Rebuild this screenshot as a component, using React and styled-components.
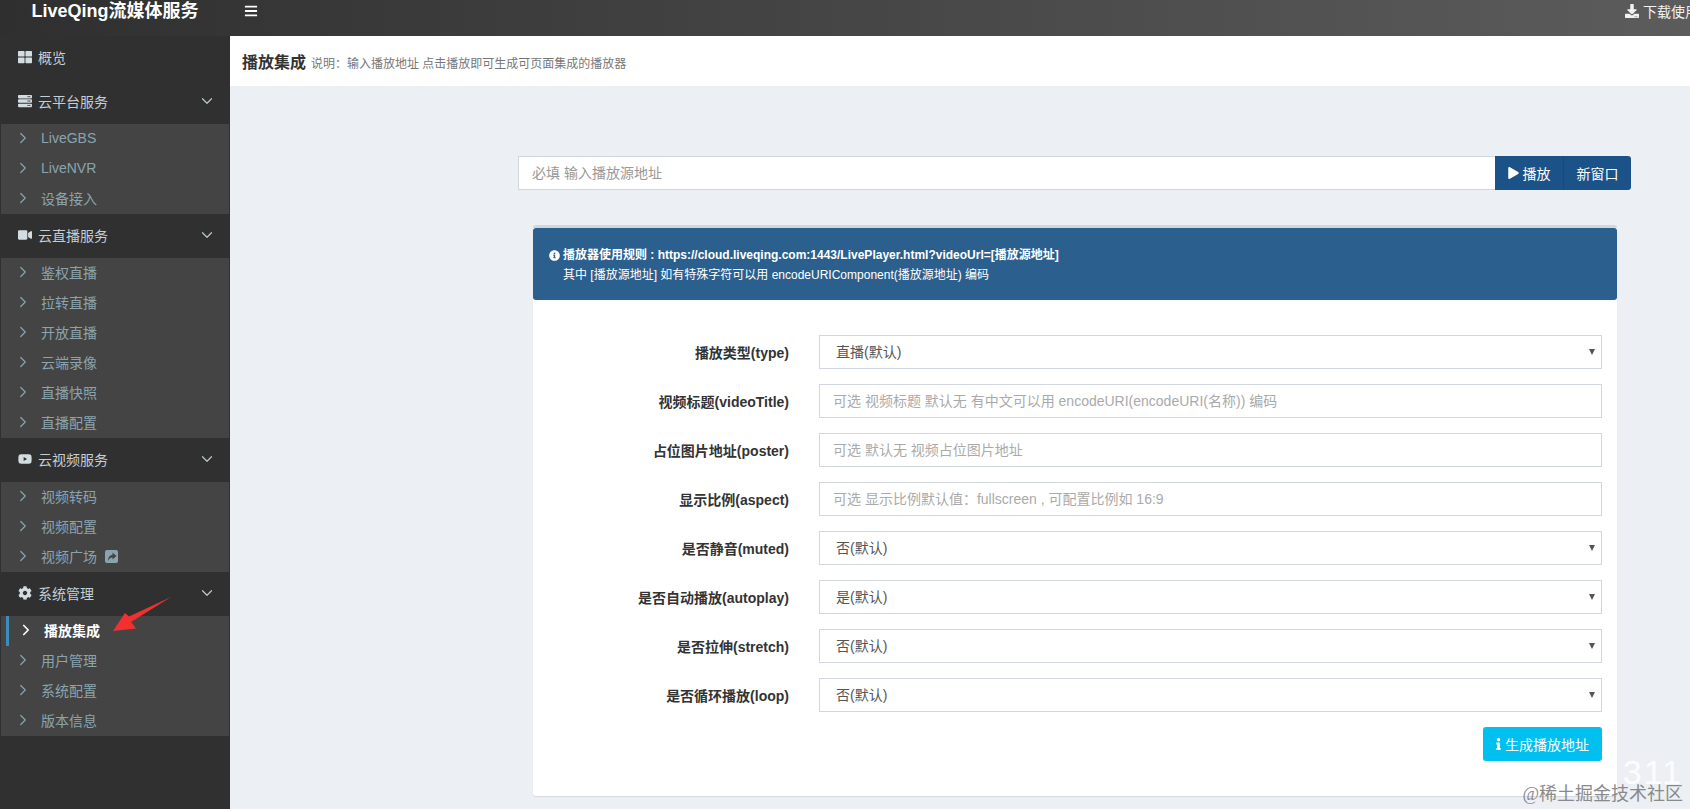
import React from 'react';
import styled, { createGlobalStyle } from 'styled-components';
import { ChevronDown, ChevronRight } from 'lucide-react';
import {
  FaBars,
  FaCog,
  FaDownload,
  FaInfo,
  FaInfoCircle,
  FaPlay,
  FaServer,
  FaThLarge,
  FaVideo,
  FaYoutube,
} from 'react-icons/fa';

const GlobalStyle = createGlobalStyle`
  html, body {
    margin: 0;
    padding: 0;
    height: 100%;
    overflow: hidden;
    font-family: "Liberation Sans", "Noto Sans CJK SC", sans-serif;
    font-size: 14px;
    background: #ecf0f5;
  }
  * {
    box-sizing: border-box;
  }
`;

const Page = styled.div`
  position: relative;
  width: 100%;
  height: 100vh;
  display: flex;
  flex-direction: column;
  overflow: hidden;
`;

const Topbar = styled.header`
  flex: 0 0 36px;
  display: flex;
  align-items: flex-start;
  background: linear-gradient(to right, #2f2f2f, #5c5c5c);
  color: #fff;
  overflow: hidden;
`;

const Logo = styled.div`
  width: 230px;
  text-align: center;
  font-size: 18px;
  font-weight: 700;
  line-height: 22px;
`;

const MenuToggle = styled.div`
  display: flex;
  align-items: center;
  height: 22px;
  padding-left: 14px;
  font-size: 14px;
`;

const DownloadLink = styled.div`
  margin-left: auto;
  width: 65px;
  flex: none;
  display: flex;
  align-items: center;
  gap: 4px;
  height: 22px;
  white-space: nowrap;
  color: #f2f2f2;

  svg {
    flex: none;
  }
`;

const Body = styled.div`
  flex: 1;
  display: flex;
  min-height: 0;
`;

const Sidebar = styled.nav`
  flex: 0 0 230px;
  background: #303030;
`;

const MenuHeader = styled.div`
  height: 44px;
  display: flex;
  align-items: center;
  padding: 0 0 2px 18px;
  color: #c4ced3;
  background: #303030;

  > svg:first-child {
    flex: none;
    width: 14px;
    height: 14px;
    margin-right: 6px;
    color: #d3dce0;
  }
`;

const Caret = styled(ChevronDown)`
  margin-left: auto;
  margin-right: 14px;
  color: #b8c7ce;
`;

const SubMenu = styled.div`
  margin: 0 1px;
  background: #444;
`;

const SubItem = styled.div`
  position: relative;
  height: 30px;
  display: flex;
  align-items: center;
  padding: 0 0 2px ${({ $active }) => ($active ? '16px' : '13px')};
  font-weight: ${({ $active }) => ($active ? 700 : 400)};
  color: ${({ $active }) => ($active ? '#fff' : '#8aa4af')};

  > svg:first-child {
    flex: none;
    margin-right: 9px;
    color: ${({ $active }) => ($active ? '#fff' : '#8aa4af')};
  }

  ${({ $active }) =>
    $active &&
    `
    &::before {
      content: '';
      position: absolute;
      left: 5px;
      top: 0;
      bottom: 0;
      width: 3px;
      background: #3c8dbc;
    }
  `}
`;

const ShareBadge = styled.svg`
  width: 13px;
  height: 13px;
  margin-left: 8px;
`;

const Main = styled.main`
  flex: 1;
  min-width: 0;
  background: #ecf0f5;
`;

const PageHeader = styled.div`
  height: 50px;
  padding-left: 12px;
  display: flex;
  align-items: center;
  background: #fff;
`;

const PageTitle = styled.h1`
  margin: 0 5px 0 0;
  font-size: 16px;
  font-weight: 700;
  color: #333;
`;

const PageHint = styled.small`
  font-size: 12px;
  color: #777;
  margin-top: 3px;
`;

const SourceRow = styled.div`
  display: flex;
  height: 34px;
  margin: 70px 59px 0 288px;
`;

const SourceInput = styled.input`
  flex: 1;
  min-width: 0;
  height: 34px;
  padding: 0 13px;
  border: 1px solid #d2d6de;
  border-right: 0;
  outline: 0;
  background: #fff;
  font: inherit;

  &::placeholder {
    color: #999;
  }
`;

const SourceButton = styled.button`
  height: 34px;
  width: ${({ $width }) => $width}px;
  padding: 0;
  display: flex;
  align-items: center;
  justify-content: center;
  gap: 4px;
  border: 0;
  border-left: ${({ $divided }) => ($divided ? '1px solid #174a7c' : '0')};
  border-radius: ${({ $last }) => ($last ? '0 3px 3px 0' : '0')};
  background: #1b5288;
  color: #fff;
  font: inherit;

  svg {
    width: 11px;
    height: 12px;
  }
`;

const Card = styled.section`
  margin: 35px 73px 0 303px;
  height: 571px;
  background: #fff;
  border-radius: 3px;
  box-shadow: 0 1px 1px rgba(0, 0, 0, 0.1);
  border-top: 3px solid #d2d6de;
`;

const Notice = styled.div`
  height: 72px;
  padding: 17px 16px 0 16px;
  background: #2b5f8e;
  border-radius: 3px;
  color: #fff;
  font-size: 12px;
  line-height: 20px;
`;

const NoticeLine = styled.div`
  display: flex;
  align-items: center;
  font-weight: ${({ $bold }) => ($bold ? 700 : 400)};
  padding-left: ${({ $indent }) => ($indent ? '14px' : '0')};

  svg {
    width: 11px;
    height: 11px;
    margin-right: 3px;
  }
`;

const Form = styled.form`
  display: flex;
  flex-direction: column;
  gap: 15px;
  padding: 35px 15px 0 0;
`;

const FormRow = styled.div`
  display: flex;
  align-items: center;
  height: 34px;
`;

const FieldLabel = styled.label`
  flex: 0 0 256px;
  margin-right: 30px;
  text-align: right;
  font-size: 14px;
  font-weight: 700;
  color: #333;
`;

const TextField = styled.input`
  flex: 1;
  height: 34px;
  padding: 0 13px;
  border: 1px solid #d2d6de;
  outline: 0;
  font: inherit;

  &::placeholder {
    color: #aaa;
  }
`;

const SelectWrap = styled.div`
  position: relative;
  flex: 1;
  height: 34px;

  &::after {
    content: '';
    position: absolute;
    right: 7px;
    top: 14px;
    border-left: 3px solid transparent;
    border-right: 3px solid transparent;
    border-top: 6px solid #555;
    pointer-events: none;
  }
`;

const SelectField = styled.select`
  width: 100%;
  height: 34px;
  padding: 0 16px;
  border: 1px solid #d2d6de;
  border-radius: 0;
  outline: 0;
  appearance: none;
  background: #fff;
  color: #555;
  font: inherit;
`;

const Actions = styled.div`
  display: flex;
  justify-content: flex-end;
`;

const GenerateButton = styled.button`
  width: 119px;
  height: 34px;
  padding: 0;
  display: flex;
  align-items: center;
  justify-content: center;
  gap: 4px;
  border: 0;
  border-radius: 3px;
  background: #00c0ef;
  color: #fff;
  font: inherit;

  svg {
    width: 5px;
    height: 12px;
  }
`;

const RedArrow = styled.svg`
  position: absolute;
  left: 110px;
  top: 594px;
  width: 64px;
  height: 40px;
`;

const Watermark = styled.div`
  position: absolute;
  right: 7px;
  bottom: 3px;
  font-family: "Liberation Serif", "Noto Sans CJK SC", serif;
  font-size: 18px;
  line-height: 24px;
  color: #8a8a8a;
`;

const Counter = styled.div`
  position: absolute;
  right: 7px;
  bottom: 24px;
  font-size: 34px;
  line-height: 26px;
  letter-spacing: 2px;
  color: rgba(255, 255, 255, 0.85);
`;

const menu = [
  { title: '概览', icon: FaThLarge },
  { title: '云平台服务', icon: FaServer, items: ['LiveGBS', 'LiveNVR', '设备接入'] },
  {
    title: '云直播服务',
    icon: FaVideo,
    items: ['鉴权直播', '拉转直播', '开放直播', '云端录像', '直播快照', '直播配置'],
  },
  { title: '云视频服务', icon: FaYoutube, items: ['视频转码', '视频配置', '视频广场'] },
  { title: '系统管理', icon: FaCog, items: ['播放集成', '用户管理', '系统配置', '版本信息'] },
];

const fields = [
  { label: '播放类型(type)', value: '直播(默认)' },
  { label: '视频标题(videoTitle)', hint: '可选 视频标题 默认无 有中文可以用 encodeURI(encodeURI(名称)) 编码' },
  { label: '占位图片地址(poster)', hint: '可选 默认无 视频占位图片地址' },
  { label: '显示比例(aspect)', hint: '可选 显示比例默认值：fullscreen , 可配置比例如 16:9' },
  { label: '是否静音(muted)', value: '否(默认)' },
  { label: '是否自动播放(autoplay)', value: '是(默认)' },
  { label: '是否拉伸(stretch)', value: '否(默认)' },
  { label: '是否循环播放(loop)', value: '否(默认)' },
];

const App = () => (
  <Page>
    <GlobalStyle />
    <Topbar>
      <Logo>LiveQing流媒体服务</Logo>
      <MenuToggle>
        <FaBars />
      </MenuToggle>
      <DownloadLink>
        <FaDownload size={14} />
        下载使用手册
      </DownloadLink>
    </Topbar>
    <Body>
      <Sidebar>
        {menu.map(({ title, icon: Icon, items }) => (
          <div key={title}>
            <MenuHeader>
              <Icon />
              {title}
              {items && <Caret size={18} strokeWidth={1.6} />}
            </MenuHeader>
            {items && (
              <SubMenu>
                {items.map((item) => (
                  <SubItem key={item} $active={item === '播放集成'}>
                    <ChevronRight size={18} strokeWidth={item === '播放集成' ? 2.2 : 1.6} />
                    {item}
                    {item === '视频广场' && (
                      <ShareBadge viewBox="0 0 13 13">
                        <rect width="13" height="13" rx="2" fill="#8aa4af" />
                        <path d="M3 11C3 7 5 5 7.500 5V2.500L11.500 6 7.500 9.500V7.500C5.500 7.500 4 8.500 3 11z" fill="#444" />
                      </ShareBadge>
                    )}
                  </SubItem>
                ))}
              </SubMenu>
            )}
          </div>
        ))}
      </Sidebar>
      <Main>
        <PageHeader>
          <PageTitle>播放集成</PageTitle>
          <PageHint>说明：输入播放地址 点击播放即可生成可页面集成的播放器</PageHint>
        </PageHeader>
        <SourceRow>
          <SourceInput placeholder="必填 输入播放源地址" />
          <SourceButton type="button" $width={68}>
            <FaPlay />
            播放
          </SourceButton>
          <SourceButton type="button" $width={68} $divided $last>
            新窗口
          </SourceButton>
        </SourceRow>
        <Card>
          <Notice>
            <NoticeLine $bold>
              <FaInfoCircle />
              播放器使用规则 : https://cloud.liveqing.com:1443/LivePlayer.html?videoUrl=[播放源地址]
            </NoticeLine>
            <NoticeLine $indent>
              其中 [播放源地址] 如有特殊字符可以用 encodeURIComponent(播放源地址) 编码
            </NoticeLine>
          </Notice>
          <Form>
            {fields.map(({ label, value, hint }) => (
              <FormRow key={label}>
                <FieldLabel>{label}</FieldLabel>
                {value ? (
                  <SelectWrap>
                    <SelectField defaultValue={value}>
                      <option>{value}</option>
                    </SelectField>
                  </SelectWrap>
                ) : (
                  <TextField placeholder={hint} />
                )}
              </FormRow>
            ))}
            <Actions>
              <GenerateButton type="button">
                <FaInfo />
                生成播放地址
              </GenerateButton>
            </Actions>
          </Form>
        </Card>
      </Main>
    </Body>
    <RedArrow viewBox="0 0 64 40">
      <polygon points="3,37 15,19 19,22.500 61,3 21,28 26,34.500" fill="#f33030" />
    </RedArrow>
    <Counter>311</Counter>
    <Watermark>@稀土掘金技术社区</Watermark>
  </Page>
);

export default App;
